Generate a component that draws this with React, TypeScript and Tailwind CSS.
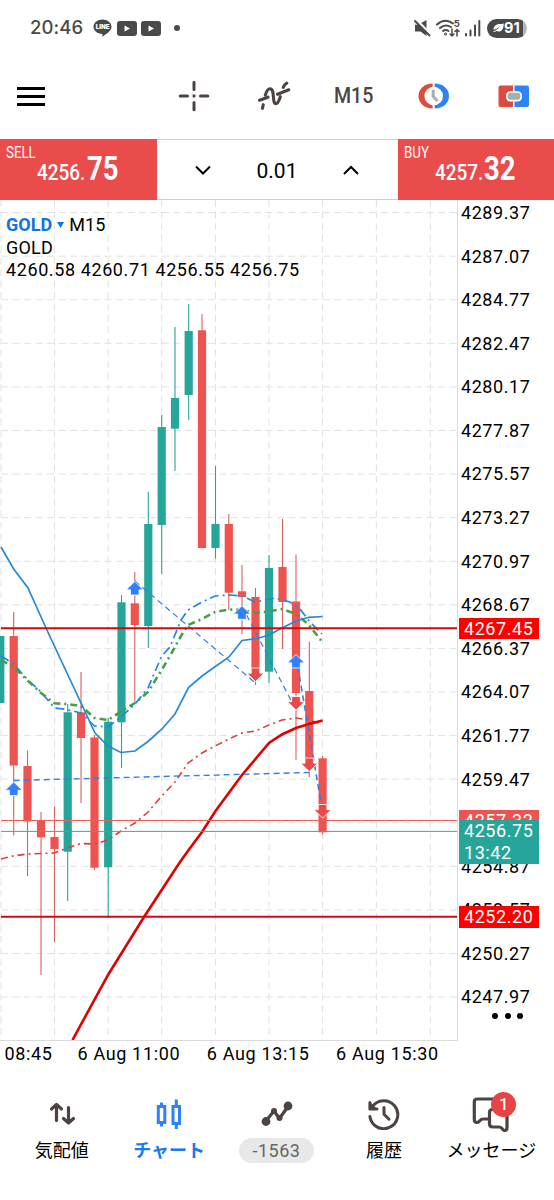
import type { ReactNode } from "react";

type Candle = {
  x: number;
  high: number;
  low: number;
  top: number;
  bottom: number;
  up?: boolean;
};

const candles: Candle[] = [
  { x: 0.3, high: 636, low: 703, top: 636, bottom: 703, up: true },
  { x: 13.7, high: 612, low: 835.5, top: 636, bottom: 765.5 },
  { x: 27.5, high: 750.5, low: 876, top: 766, bottom: 821.5 },
  { x: 41, high: 812, low: 975, top: 820, bottom: 837.3 },
  { x: 54.5, high: 806.5, low: 942, top: 837, bottom: 849 },
  { x: 67.7, high: 704, low: 901, top: 712.3, bottom: 851.7, up: true },
  { x: 81, high: 672, low: 803, top: 712.3, bottom: 738 },
  { x: 94.5, high: 735, low: 870, top: 737.5, bottom: 867.7 },
  { x: 108.2, high: 718, low: 916, top: 721.7, bottom: 867.3, up: true },
  { x: 121.5, high: 595, low: 768, top: 602.3, bottom: 722.3, up: true },
  { x: 134.8, high: 572, low: 702, top: 603.3, bottom: 625 },
  { x: 148.3, high: 491.7, low: 648, top: 524, bottom: 626, up: true },
  { x: 161.7, high: 415, low: 574, top: 427, bottom: 525, up: true },
  { x: 175, high: 327, low: 471, top: 398, bottom: 428.7, up: true },
  { x: 188.7, high: 304, low: 420, top: 331, bottom: 395, up: true },
  { x: 202, high: 314, low: 548, top: 330.3, bottom: 548 },
  { x: 215.5, high: 466, low: 558.5, top: 524, bottom: 548, up: true },
  { x: 228.8, high: 514, low: 610, top: 524, bottom: 592.7 },
  { x: 242, high: 565, low: 634, top: 591.3, bottom: 597 },
  { x: 255.5, high: 588, low: 685, top: 597, bottom: 668 },
  { x: 269, high: 555, low: 683, top: 568, bottom: 671.7, up: true },
  { x: 282.5, high: 519, low: 649, top: 567, bottom: 602 },
  { x: 296, high: 554.5, low: 760, top: 601.5, bottom: 693 },
  { x: 309.3, high: 641.5, low: 777, top: 691, bottom: 758 },
  { x: 322.6, high: 756, low: 834.5, top: 758.3, bottom: 832.3 },
];

const priceLabels = [
  "4289.37", "4287.07", "4284.77", "4282.47", "4280.17", "4277.87", "4275.57",
  "4273.27", "4270.97", "4268.67", "4266.37", "4264.07", "4261.77", "4259.47",
  "4257.17", "4254.87", "4252.57", "4250.27", "4247.97",
];

const gridX = [1, 54.5, 108.2, 161.7, 215.5, 269, 322.6, 376.4, 430.3];
const gridY = priceLabels.map((_, i) => 212.6 + i * 43.58);

const upArrows = [
  [13.7, 782],
  [134.8, 581.5],
  [242, 605.8],
  [296, 654.5],
];

const downArrows = [
  [255.5, 681.5],
  [296, 710],
  [309.3, 771.5],
  [322.6, 818],
];

function Chart() {
  return (
    <svg viewBox="0 200 458 840" className="block h-[840px] w-[458px]">
      <g stroke="#e2e2e2" strokeWidth="1" strokeDasharray="7 4.5">
        {gridX.map((x) => (
          <line key={x} x1={x} x2={x} y1="200" y2="1040" />
        ))}
        {gridY.map((y) => (
          <line key={y} x1="1" x2="457" y1={y} y2={y} />
        ))}
      </g>

      {candles.map((c) => (
        <g key={c.x} fill={c.up ? "#26a69a" : "#ef5350"}>
          <line
            x1={c.x}
            x2={c.x}
            y1={c.high}
            y2={c.low}
            stroke={c.up ? "#26a69a" : "#d8605e"}
            strokeWidth="1.1"
          />
          <rect x={c.x - 4.1} y={c.top} width="8.2" height={c.bottom - c.top} />
        </g>
      ))}

      <g fill="none">
        {/* Moving averages */}
        <path
          d="M1 656L13.7 664L27 679L41 692L54.5 708L67 709.5L81 713L94.5 726L108 727L121 717L135 704L148 688L161.7 656L170 647L181 620L188 610L202 602L215 596L229 595L242 596L255.5 602L275 598L290 602L300 609L310 622L322 634"
          stroke="#1e88e5"
          strokeWidth="1.7"
          strokeDasharray="9 4 2 4"
        />
        <path
          d="M1 660L13.7 667L27 680L41 693L54.5 703.3L67 704L81 706L94.5 718L108 720L121 711.5L135 703L148 692L161.7 670L171 654L181 636L188 625L202 619L215 612L229 609.5L242 610L255.5 613L269 611.5L282 609L296 614L309 625L322.6 642.5"
          stroke="#43a047"
          strokeWidth="2.6"
          strokeDasharray="7 4 2 4"
        />
        <path
          d="M1 859L13 856L27 854L54 853L67 848L81 843.5L95 844L108 840L121 831L135 823L148 812L161.7 796L175 782L188 763L202 753L215 746L229 739L242 733L255.5 731L269 725L282 720L296 718L309 720L322 724"
          stroke="#d9403d"
          strokeWidth="1.6"
          strokeDasharray="7 4 2 4"
        />
        <path
          d="M1 547L13.7 569L28 588L46 628L81 703L95 733L108 746L121 752.5L135 751L148 741.5L162 729L175 714L188.5 687.5L202 676L229 657L242 640.5L257 638.5L269 635L282 628L296 621L309 617.3L322.6 616.5"
          stroke="#2489d8"
          strokeWidth="1.7"
        />
        <path
          d="M72.5 1040L108 975L144 917L180 862L189 849.5L202 832L215.5 811L242 775L269 743L282 734.5L296 728L309 724L322.6 720.5"
          stroke="#e10000"
          strokeWidth="2.6"
        />

        {/* Closed trades */}
        <g stroke="#3b7ddd" strokeWidth="1.2" strokeDasharray="6 4">
          <path d="M134.8 581L255.5 683" />
          <path d="M242 606L296 710" />
          <path d="M296 656L322.6 812" strokeWidth="1.6" />
          <path d="M13.7 780.5L309.3 772.5" strokeWidth="1.4" />
        </g>
      </g>

      <line x1="1" x2="457" y1="628.2" y2="628.2" stroke="#cf0a10" strokeWidth="2" />
      <line x1="1" x2="457" y1="916.8" y2="916.8" stroke="#cf0a10" strokeWidth="2" />
      <line x1="1" x2="457" y1="820.5" y2="820.5" stroke="#e0615e" strokeWidth="1" />
      <line x1="1" x2="457" y1="831.4" y2="831.4" stroke="#3fa79d" strokeWidth="1" />

      {upArrows.map(([x, y]) => (
        <path
          key={`${x}-${y}`}
          transform={`translate(${x} ${y})`}
          d="M0 0L8.6 8.3H4.3V13.5H-4.3V8.3H-8.6Z"
          fill="#2f80ff"
          stroke="#fff"
          strokeWidth="0.8"
        />
      ))}
      {downArrows.map(([x, y]) => (
        <path
          key={`${x}-${y}`}
          transform={`translate(${x} ${y})`}
          d="M0 0L8.6 -8.3H4.3V-13.5H-4.3V-8.3H-8.6Z"
          fill="#e84a4a"
          stroke="#fff"
          strokeWidth="0.8"
        />
      ))}
      <line x1="457.5" x2="457.5" y1="200" y2="1040" stroke="#dcdcdc" />
    </svg>
  );
}

function StatusBar() {
  return (
    <div className="flex h-14 items-center justify-between pl-[30px] pr-[27px] text-[#4a4a4a]">
      <div className="flex items-center">
        <span className="w-[63px] font-[Inter] text-[18.5px] font-medium tracking-[0.1px]">20:46</span>
        <svg className="h-[18px] w-[19px]" viewBox="0 0 19 18">
          <path d="M9.5 0.5C14.5 0.5 18.5 3.7 18.5 7.8C18.5 11.6 14 14.5 9.5 17.8C9.3 17 9.7 16 9.2 15C4.4 14.8 0.5 11.8 0.5 7.8C0.5 3.7 4.5 0.5 9.5 0.5Z" fill="#4a4a4a" />
          <text x="9.6" y="10.3" fontSize="6.2" fontWeight="900" fill="#fff" textAnchor="middle" fontFamily="Inter">LINE</text>
        </svg>
        <div className="ml-[5px] flex gap-1">
          {[0, 1].map((i) => (
            <svg key={i} className="h-[15px] w-5" viewBox="0 0 20 15">
              <rect width="20" height="15" rx="3" fill="#4a4a4a" />
              <path d="M7.5 4.5L13 7.5L7.5 10.5Z" fill="#fff" />
            </svg>
          ))}
        </div>
        <span className="ml-[13px] size-1.5 rounded-full bg-[#4a4a4a]" />
      </div>
      <div className="flex items-center">
        <svg className="h-[18px] w-[17px]" viewBox="0 0 17 18" fill="#4a4a4a">
          <path d="M1 5.8H4L12.5 1V17L6.500 12.5H1Z" />
          <path d="M2 0.800L16.5 15.5" stroke="#fff" strokeWidth="3" />
          <path d="M1 2L15.5 16.5" stroke="#4a4a4a" strokeWidth="2" strokeLinecap="round" />
        </svg>
        <svg className="ml-1 h-[19px] w-[27px]" viewBox="0 0 27 19" fill="none" stroke="#4a4a4a" strokeWidth="2" strokeLinecap="round">
          <path d="M2 5.5Q10 -1.5 18 4.5" />
          <path d="M5 9Q10 4.5 16 8" />
          <path d="M8 12Q10.5 10 13.5 12" />
          <circle cx="10.5" cy="15" r="0.5" />
          <path d="M17 10V17M15 15L17 17L19 15M22 17V10.5M20 12.5L22 10.5L24 12.5" strokeWidth="1.5" />
          <text x="18.8" y="8.3" fontSize="9.5" fontWeight="700" fill="#4a4a4a" stroke="none" fontFamily="Inter">5</text>
        </svg>
        <svg className="ml-0.5 h-[17px] w-[18px]" viewBox="0 0 18 17" stroke="#4a4a4a" strokeWidth="2" strokeLinecap="round">
          <path d="M2 14V15.5M6.5 10.5V15.5M11 5.5V15.5M15.3 1V15.5" />
        </svg>
        <div className="ml-[5px] flex h-[19px] w-10 items-center rounded-full bg-linear-to-r from-[#4a4a4a] from-91% to-[#b8b8b8] to-91% pl-1.5 text-white">
          <svg className="h-2.5 w-[11px]" viewBox="0 0 11 10" fill="#fff">
            <path d="M10.8 0.5C10.5 6 9 8.5 5.5 8.5C4.3 8.5 3.3 8 2.6 7.3C4.3 6.5 6 5 7 3.2C5 5.2 3 6.3 0.5 6.8C0.5 3.5 3 1 6.5 1C8 1 9.5 1 10.8 0.5Z" />
            <path d="M0.5 8.5Q3 8.5 5.5 6" stroke="#fff" fill="none" />
          </svg>
          <span className="font-[Inter] text-[14.5px] leading-none font-bold">91</span>
        </div>
      </div>
    </div>
  );
}

function Toolbar() {
  return (
    <div className="flex h-[83px] items-center justify-between pb-[3px] pl-[17px]">
      <div className="flex w-7 flex-col gap-[5px]">
        <span className="h-[3px] bg-black" />
        <span className="h-[3px] bg-black" />
        <span className="h-[3px] bg-black" />
      </div>
      <div className="flex items-center text-[#4d4442]">
        <div className="flex w-20 justify-center">
          <svg className="size-8" viewBox="0 0 32 32" stroke="currentColor" strokeWidth="3" strokeLinecap="round">
            <path d="M16 2.2V9.5M16 22.5V29.8M2.2 16H9.5M22.5 16H29.8" />
            <path d="M14.6 16H17.4" strokeLinecap="butt" />
          </svg>
        </div>
        <div className="flex w-20 justify-center">
          <svg className="size-9" viewBox="255 78 36 36" fill="none" stroke="currentColor" strokeWidth="3.1" strokeLinecap="round">
            <path d="M261.4 108.3L262.3 104.7" />
            <path d="M258.5 100.2L267 97.2" />
            <path d="M264.3 95.2C265.5 91 267 88.8 269 88.8C274.5 88.8 270.5 103.6 275 103.6C277.3 103.6 278.3 99.5 279.3 96.7" />
            <path d="M276.5 94.3L287.8 89.8" />
            <path d="M282.2 87.3C283.2 85 284.3 84 285.8 83.2" />
          </svg>
        </div>
        <div className="flex w-20 items-center justify-center font-[Roboto] text-[22.5px] font-medium">
          <span className="scale-x-[0.87]">M15</span>
        </div>
        <div className="flex w-20 justify-center">
          <svg className="size-8" viewBox="0 0 32 32">
            <path d="M14.6 3.5V28.5C6.5 28.5 0.5 23 0.5 16S6.5 3.5 14.6 3.5Z" fill="#dd4b3e" />
            <path d="M16.6 3.5C25 3.5 31 9 31 16S25 28.5 16.6 28.5Z" fill="#2e84f7" />
            <circle cx="15.7" cy="16" r="9.3" fill="#fff" />
            <path d="M15.2 9.8V16.5L19.5 21" fill="none" stroke="#a3afb6" strokeWidth="3" />
          </svg>
        </div>
        <div className="flex w-20 justify-center">
          <svg className="size-8" viewBox="0 0 32 32">
            <path d="M15 5.5V27H2.5Q0.5 27 0.5 25V7.5Q0.5 5.5 2.5 5.5Z" fill="#dd4b3e" />
            <path d="M16.5 5.5H29Q31 5.5 31 7.5V25Q31 27 29 27H16.5Z" fill="#2e84f7" />
            <rect x="8.8" y="12" width="14.4" height="8.6" rx="3.5" fill="#a3afb6" stroke="#fff" strokeWidth="1.6" />
          </svg>
        </div>
      </div>
    </div>
  );
}

function QuoteButton({ label, price, pips }: { label: string; price: string; pips: string }) {
  return (
    <div className="relative flex w-[156.5px] items-baseline bg-[#ea4b4b] pl-[37px] font-[Roboto] text-white">
      <span className="absolute top-1.5 left-1.5 origin-left scale-x-[0.83] text-[16px] leading-4">{label}</span>
      <span className="w-[49.5px] text-[21.5px] leading-[60px] font-medium">
        <span className="inline-block origin-left scale-x-[0.88]">{price}</span>
      </span>
      <span className="w-8 text-[33.5px] leading-[60px] font-bold">
        <span className="inline-block origin-left scale-x-[0.82]">{pips}</span>
      </span>
    </div>
  );
}

function TradePanel() {
  return (
    <div className="flex h-[61px] justify-between">
      <QuoteButton label="SELL" price="4256." pips="75" />
      <div className="flex flex-1 items-center justify-between border-y border-[#cfcfcf] px-[38px] font-[Roboto]">
        <svg className="size-4" viewBox="0 0 16 16" fill="none" stroke="#000" strokeWidth="2">
          <path d="M1 4.500L8 11.500L15 4.500" />
        </svg>
        <span className="pt-[3px] text-[21px] leading-none">0.01</span>
        <svg className="size-4" viewBox="0 0 16 16" fill="none" stroke="#000" strokeWidth="2">
          <path d="M1 12L8 5L15 12" />
        </svg>
      </div>
      <QuoteButton label="BUY" price="4257." pips="32" />
    </div>
  );
}

function PriceTag({ className, children }: { className: string; children: ReactNode }) {
  return (
    <div className={`absolute left-[1px] w-20 pl-[5px] text-white ${className}`}>{children}</div>
  );
}

function PriceAxis() {
  return (
    <div className="relative h-[840px] flex-1 overflow-hidden pl-[3px] tracking-[0.55px]">
      <div className="-mt-[9px]">
        {priceLabels.map((p) => (
          <div key={p} className="h-[43.58px] leading-[43.58px]">{p}</div>
        ))}
      </div>
      <PriceTag className="top-[417.5px] h-[21.5px] bg-[#fe0000] leading-[22px]">4267.45</PriceTag>
      <PriceTag className="top-[610px] h-[21.5px] bg-[#ef5350] leading-[22px]">4257.32</PriceTag>
      <PriceTag className="top-[620px] h-[43.5px] bg-[#26a69a] leading-[22px]">
        <div>4256.75</div>
        <div>13:42</div>
      </PriceTag>
      <PriceTag className="top-[706px] h-[21.5px] bg-[#fe0000] leading-[22px]">4252.20</PriceTag>
      <div className="absolute top-[813px] left-[34px] flex gap-[6.5px]">
        <span className="size-1.5 rounded-full bg-black" />
        <span className="size-1.5 rounded-full bg-black" />
        <span className="size-1.5 rounded-full bg-black" />
      </div>
    </div>
  );
}

const timeLabels = ["6 Aug 11:00", "6 Aug 13:15", "6 Aug 15:30"];

function ChartPanel() {
  return (
    <div className="font-[Roboto] text-[18px] text-black">
      <div className="flex">
        <div className="relative">
          <Chart />
          <div className="absolute top-[14px] left-[6px] leading-[22.7px] tracking-[0.6px]">
            <div className="flex items-center">
              <span className="font-bold tracking-normal text-[#1273e0]">GOLD</span>
              <svg className="mr-[5px] ml-[5px] h-1.5 w-[7px]" viewBox="0 0 7 6">
                <path d="M0 0H7L3.5 6Z" fill="#1273e0" />
              </svg>
              <span className="tracking-[0.2px]">M15</span>
            </div>
            <div className="tracking-[0.2px]">GOLD</div>
            <div>4260.58 4260.71 4256.55 4256.75</div>
          </div>
        </div>
        <PriceAxis />
      </div>
      <div className="flex h-[30px] w-[458px] border-t border-[#dcdcdc] pl-[4.5px] leading-[26px] tracking-[0.65px]">
        <span className="w-[73px] shrink-0">08:45</span>
        {timeLabels.map((t) => (
          <span key={t} className="w-[129.3px] shrink-0 whitespace-nowrap">{t}</span>
        ))}
      </div>
    </div>
  );
}

function Tab({ icon, children }: { icon: ReactNode; children: ReactNode }) {
  return (
    <div className="flex flex-1 flex-col items-center">
      <div className="flex h-9 items-center text-[#4d4442]">{icon}</div>
      <div className="mt-[7px] flex h-6 items-center whitespace-nowrap">{children}</div>
    </div>
  );
}

function BottomNav() {
  return (
    <nav className="flex h-[130px] pt-[25.5px] pr-[9px] pl-2 font-['Roboto','Noto_Sans_CJK_JP',sans-serif] text-[18px] text-black">
      <Tab
        icon={
          <svg className="size-7" viewBox="0 0 28 28" fill="none" stroke="currentColor" strokeWidth="3.2" strokeLinecap="round" strokeLinejoin="round">
            <path d="M8.5 20.5V5M3.5 9L8.5 4.5L13.5 9" />
            <path d="M20.5 7.5V23M15.5 18.5L20.5 23L25.5 18.5" />
          </svg>
        }
      >
        気配値
      </Tab>
      <Tab
        icon={
          <svg className="h-8 w-7" viewBox="0 0 28 32" fill="none" stroke="#2f80ff" strokeWidth="3">
            <path d="M6.5 4.5V8M6.5 24V28.5M21.3 1.5V8M21.3 25V31" />
            <rect x="3.3" y="8.500" width="6.5" height="16" />
            <rect x="18" y="8.500" width="6.5" height="17" />
          </svg>
        }
      >
        <span className="font-bold text-[#1a78f0]">チャート</span>
      </Tab>
      <Tab
        icon={
          <svg className="size-8" viewBox="0 0 32 32" fill="none" stroke="currentColor" strokeWidth="3.2" strokeLinejoin="round">
            <path d="M4.5 23.5L13 13L18.5 20.5L27 8.5" />
            <circle cx="5" cy="23.5" r="4.4" fill="currentColor" stroke="none" />
            <circle cx="27" cy="8" r="4.4" fill="currentColor" stroke="none" />
            <circle cx="13" cy="13" r="3" fill="currentColor" stroke="none" />
            <circle cx="18.5" cy="20" r="3" fill="currentColor" stroke="none" />
          </svg>
        }
      >
        <span className="flex h-[25px] w-[75px] items-center justify-center rounded-full bg-[#e8e8e8] tracking-[0.5px] text-[#666]">
          -1563
        </span>
      </Tab>
      <Tab
        icon={
          <svg className="size-8" viewBox="0 0 32 32" fill="none" stroke="currentColor" strokeWidth="3" strokeLinecap="round" strokeLinejoin="round">
            <path d="M1.9 18.5A14 14 0 1 0 4.2 8.800" />
            <path d="M1.9 4.5V11H9" />
            <path d="M2.500 5L8.500 11H2.500Z" fill="currentColor" strokeWidth="1" />
            <path d="M16 9.500V16.200L21 21.200" />
          </svg>
        }
      >
        履歴
      </Tab>
      <Tab
        icon={
          <div className="relative">
            <svg className="h-9 w-10 overflow-visible" viewBox="0 0 40 36" fill="none" stroke="currentColor" strokeWidth="3.2" strokeLinejoin="round" strokeLinecap="round">
              <path d="M17 23H12C9 23 8.500 26.500 5.800 26.500Q3.300 26.500 3.300 23.500V6Q3.300 3 6.300 3H25" />
              <path d="M36 19V31.500Q36 34.500 33.500 34.500C31 34.500 31.500 31 28.500 31H22Q18.500 31 18.500 28V16.500Q18.500 13.500 21.500 13.500" />
            </svg>
            <span className="absolute -top-[3.5px] left-[20px] flex size-[25px] items-center justify-center rounded-full bg-[#ea4343] text-[16px] font-medium text-white">
              1
            </span>
          </div>
        }
      >
        メッセージ
      </Tab>
    </nav>
  );
}

export default function App() {
  return (
    <div className="h-[1200px] w-[554px] overflow-hidden bg-white">
      <StatusBar />
      <Toolbar />
      <TradePanel />
      <ChartPanel />
      <BottomNav />
    </div>
  );
}
